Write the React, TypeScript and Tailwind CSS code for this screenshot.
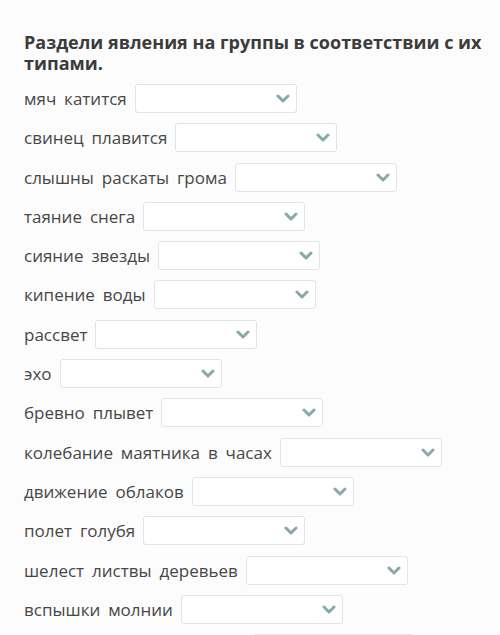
import React from "react";

const items = [
  "мяч катится",
  "свинец плавится",
  "слышны раскаты грома",
  "таяние снега",
  "сияние звезды",
  "кипение воды",
  "рассвет",
  "эхо",
  "бревно плывет",
  "колебание маятника в часах",
  "движение облаков",
  "полет голубя",
  "шелест листвы деревьев",
  "вспышки молнии",
  "распространение запахов",
];

function Chevron() {
  return (
    <svg width="14" height="9" viewBox="0 0 14 9" className="block">
      <path d="M2 2 L7 7 L12 2" fill="none" stroke="#86a9ab" strokeWidth="3" strokeLinecap="round" strokeLinejoin="round" />
    </svg>
  );
}

export default function App() {
  return (
    <div
      className="h-[635px] w-[500px] overflow-hidden bg-[#fcfcfc] pl-[24px] pt-[32px] text-[#474747]"
      style={{ fontFamily: '"Open Sans", "Noto Sans", sans-serif' }}
    >
      <h1 className="mb-[10px] text-[18px] font-bold leading-[21px] text-[#3b3b3b]">
        Раздели явления на группы в соответствии с их типами.
      </h1>
      <div className="flex flex-col gap-[10.3px]">
        {items.map((t) => (
          <div key={t} className="flex items-center gap-[8px] text-[17px] leading-[29px] [word-spacing:3.5px]">
            <span>{t}</span>
            <div className="flex h-[29px] w-[162px] shrink-0 items-center justify-end rounded-[3px] border border-[#e2e5e5] bg-white pr-[6px]">
              <Chevron />
            </div>
          </div>
        ))}
      </div>
    </div>
  );
}
